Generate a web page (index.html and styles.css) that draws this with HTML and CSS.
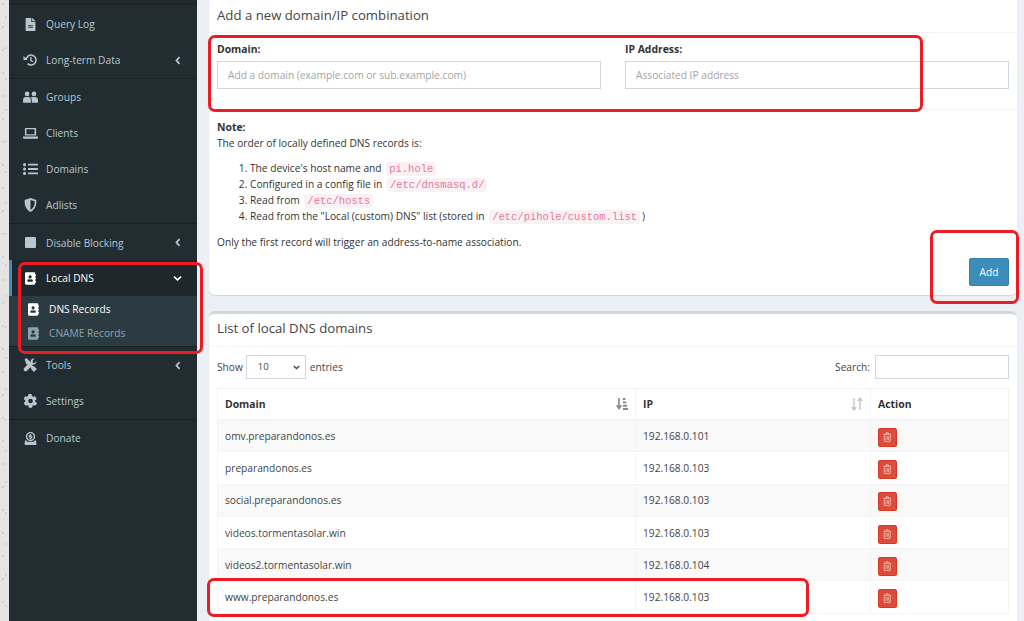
FILE: index.html
```html
<!DOCTYPE html>
<html lang="en">
<head>
<meta charset="utf-8">
<title>Local DNS Records</title>
<link rel="stylesheet" href="styles.css">
</head>
<body>
<svg class="defs" width="0" height="0" aria-hidden="true">
  <symbol id="i-file" viewBox="0 0 384 512"><path d="M224 136V0H24C10.7 0 0 10.7 0 24v464c0 13.3 10.7 24 24 24h336c13.3 0 24-10.7 24-24V160H248c-13.2 0-24-10.8-24-24zm64 236c0 6.6-5.4 12-12 12H108c-6.6 0-12-5.4-12-12v-8c0-6.6 5.4-12 12-12h168c6.6 0 12 5.4 12 12v8zm0-64c0 6.600-5.4 12-12 12H108c-6.6 0-12-5.4-12-12v-8c0-6.6 5.4-12 12-12h168c6.6 0 12 5.4 12 12v8zm96-186.100v6.100H256V0h6.100c6.400 0 12.500 2.500 17 7l97.900 98c4.500 4.500 7 10.600 7 16.900z"/></symbol>
  <symbol id="i-history" viewBox="0 0 24 24"><path d="M4.500 12a8.500 8.500 0 1 1 2.700 6.200" fill="none" stroke="currentColor" stroke-width="2.600"/><path d="M0 5l7 7H0z"/><path d="M12.500 7v5.500l3.500 2.500" fill="none" stroke="currentColor" stroke-width="2.400"/></symbol>
  <symbol id="i-users" viewBox="0 0 24 18"><circle cx="6.500" cy="4" r="3.700"/><circle cx="17.500" cy="4" r="3.700"/><path d="M0 17v-3c0-3 2-5 4-5h5c2 0 3.500 2 3.500 5v3a1 1 0 0 1-1 1H1a1 1 0 0 1-1-1z"/><path d="M14 18v-4c0-2-.500-3.500-1.500-5h6.500c3 0 5 2 5 5v3a1 1 0 0 1-1 1z"/></symbol>
  <symbol id="i-laptop" viewBox="0 0 24 18"><path d="M4 1h16a1 1 0 0 1 1 1v11H3V2a1 1 0 0 1 1-1zm1.500 2v8h13V3z" fill-rule="evenodd"/><path d="M0 14.500h24V16a2 2 0 0 1-2 2H2a2 2 0 0 1-2-2z"/></symbol>
  <symbol id="i-list" viewBox="0 0 24 20"><circle cx="2.500" cy="3" r="2.500"/><circle cx="2.500" cy="10" r="2.500"/><circle cx="2.500" cy="17" r="2.500"/><rect x="8" y="1.500" width="16" height="3" rx=".8"/><rect x="8" y="8.500" width="16" height="3" rx=".8"/><rect x="8" y="15.500" width="16" height="3" rx=".8"/></symbol>
  <symbol id="i-shield" viewBox="0 0 22 24"><path d="M11 0l10 3.500c.500 9-2 16.500-10 20.500C3 20 .500 12.500 1 3.500zm0 3.300v17.200c5.500-3.200 7.300-8.800 7.200-15z" fill-rule="evenodd"/></symbol>
  <symbol id="i-stop" viewBox="0 0 20 20"><rect width="20" height="20" rx="2"/></symbol>
  <symbol id="i-book" viewBox="0 0 448 512"><path d="M436 160c6.600 0 12-5.400 12-12v-40c0-6.600-5.400-12-12-12h-20V48c0-26.500-21.500-48-48-48H48C21.500 0 0 21.500 0 48v416c0 26.500 21.500 48 48 48h320c26.500 0 48-21.500 48-48v-48h20c6.600 0 12-5.400 12-12v-40c0-6.600-5.400-12-12-12h-20v-64h20c6.600 0 12-5.400 12-12v-40c0-6.600-5.400-12-12-12h-20v-64h20zm-228-32c35.300 0 64 28.700 64 64s-28.700 64-64 64-64-28.700-64-64 28.700-64 64-64zm112 236.800c0 10.600-10 19.200-22.400 19.200H118.400C106 384 96 375.400 96 364.800v-19.200c0-31.800 30.100-57.600 67.200-57.600h5c12.300 5.100 25.700 8 39.800 8s27.600-2.900 39.800-8h5c37.100 0 67.200 25.800 67.200 57.600v19.200z"/></symbol>
  <symbol id="i-tools" viewBox="0 0 24 24"><path d="M2 2l3-2 6 6v3l5 5 2 0 5 5-5 5-5-5v-2L8 11H5z" /><path d="M22.500 5l-3.500 3.500-3-.500-.500-3L19 1c-3-1.200-7 .800-6.800 5l-11 11c-1.500 1.500-1.300 3.500 0 4.800s3.300 1.400 4.800 0l11-11c4 .200 6-3.300 4.500-5.800z"/></symbol>
  <symbol id="i-cog" viewBox="0 0 24 24"><path d="M22 14.500l-2-1.100c.100-1 .100-1.900 0-2.900l2-1.100c.300-.200.400-.500.300-.800-.600-1.700-1.500-3.300-2.700-4.600-.200-.200-.600-.300-.800-.200l-2 1.200c-.800-.600-1.700-1.200-2.600-1.500V1.200c0-.300-.200-.600-.500-.700-1.800-.400-3.600-.400-5.300 0-.300.100-.500.300-.500.700v2.300c-.900.300-1.800.900-2.600 1.500l-2-1.200c-.300-.100-.600-.100-.800.200C2.200 5.300 1.300 6.900.700 8.600c-.100.300 0 .600.300.800l2 1.100c-.100 1-.100 1.900 0 2.900l-2 1.100c-.300.200-.400.500-.300.800.600 1.700 1.500 3.300 2.700 4.600.200.200.600.300.800.200l2-1.200c.800.600 1.700 1.200 2.600 1.500v2.300c0 .300.200.600.500.700 1.800.400 3.600.400 5.300 0 .300-.100.500-.300.500-.700v-2.300c.900-.300 1.800-.900 2.600-1.500l2 1.200c.300.100.600.100.800-.200 1.200-1.300 2.100-2.900 2.700-4.600.100-.300 0-.600-.300-.800zM12 16a4 4 0 1 1 0-8 4 4 0 0 1 0 8z"/></symbol>
  <symbol id="i-donate" viewBox="0 0 24 24"><path d="M12 1.500a8 8 0 1 1 0 16 8 8 0 0 1 0-16zm0 2.500a5.500 5.500 0 1 0 0 11 5.500 5.500 0 0 0 0-11z" fill-rule="evenodd"/><path d="M11 5.500h2v1.200h2v1.600h-3.500v.7H15V13h-2v1.200h-2V13H9v-1.600h3.500v-.7H9V6.700h2z"/><path d="M3 16h2l1 2.500h12l1-2.500h2l1 4v3a1 1 0 0 1-1 1H3a1 1 0 0 1-1-1v-3z"/></symbol>
  <symbol id="i-trash" viewBox="0 0 20 24"><path d="M1 5h18M7 4.500l1-3h4l1 3" fill="none" stroke="currentColor" stroke-width="2"/><path d="M3 5.500V21a1.500 1.500 0 0 0 1.500 1.500h11A1.500 1.500 0 0 0 17 21V5.500" fill="none" stroke="currentColor" stroke-width="2"/><path d="M7 9v10M10 9v10M13 9v10" fill="none" stroke="currentColor" stroke-width="1.500"/></symbol>
  <symbol id="i-left" viewBox="0 0 10 14"><path d="M7.500 1.500L2.500 7l5 5.500" fill="none" stroke="currentColor" stroke-width="3"/></symbol>
  <symbol id="i-down" viewBox="0 0 14 10"><path d="M1.500 2l5.500 5 5.500-5" fill="none" stroke="currentColor" stroke-width="2.600"/></symbol>
  <symbol id="i-sort-active" viewBox="0 0 14 14"><path d="M3.500 0v11M0.800 8.500l2.700 3.800 2.700-3.800" fill="none" stroke="currentColor" stroke-width="1.900"/><path d="M8 0h3v2.200H8zM8 4h4v2.200H8zM8 8h5v2.200H8zM8 11.800h6V14H8z"/></symbol>
  <symbol id="i-sort" viewBox="0 0 12 14"><path d="M3 1v12M.8 10l2.200 3 2.200-3M9 13V1M6.800 4L9 1l2.200 3" fill="none" stroke="currentColor" stroke-width="1.500"/></symbol>
</svg>

<div class="desk"></div>

<nav class="sidebar">
  <div class="side-top"></div>
  <ul class="side-group">
    <li class="side-item"><svg class="ico ico-file"><use href="#i-file"/></svg><span>Query Log</span></li>
    <li class="side-item"><svg class="ico"><use href="#i-history"/></svg><span>Long-term Data</span><svg class="caret"><use href="#i-left"/></svg></li>
  </ul>
  <ul class="side-group">
    <li class="side-item"><svg class="ico"><use href="#i-users"/></svg><span>Groups</span></li>
    <li class="side-item"><svg class="ico"><use href="#i-laptop"/></svg><span>Clients</span></li>
    <li class="side-item"><svg class="ico"><use href="#i-list"/></svg><span>Domains</span></li>
    <li class="side-item"><svg class="ico"><use href="#i-shield"/></svg><span>Adlists</span></li>
  </ul>
  <ul class="side-group">
    <li class="side-item side-short"><svg class="ico ico-stop"><use href="#i-stop"/></svg><span>Disable Blocking</span><svg class="caret"><use href="#i-left"/></svg></li>
    <li class="side-item side-active"><svg class="ico ico-file"><use href="#i-book"/></svg><span>Local DNS</span><svg class="caret caret-down"><use href="#i-down"/></svg></li>
    <li class="side-sub">
      <div class="sub-item sub-active"><svg class="ico ico-sub"><use href="#i-book"/></svg><span>DNS Records</span></div>
      <div class="sub-item"><svg class="ico ico-sub"><use href="#i-book"/></svg><span>CNAME Records</span></div>
    </li>
  </ul>
  <ul class="side-group">
    <li class="side-item"><svg class="ico"><use href="#i-tools"/></svg><span>Tools</span><svg class="caret"><use href="#i-left"/></svg></li>
    <li class="side-item"><svg class="ico"><use href="#i-cog"/></svg><span>Settings</span></li>
  </ul>
  <ul class="side-group">
    <li class="side-item"><svg class="ico"><use href="#i-donate"/></svg><span>Donate</span></li>
  </ul>
</nav>

<main class="content">
  <section class="card card-add">
    <h3 class="card-title">Add a new domain/IP combination</h3>
    <div class="form-row">
      <label class="field"><b>Domain:</b><input class="input" placeholder="Add a domain (example.com or sub.example.com)"></label>
      <label class="field"><b>IP Address:</b><input class="input" placeholder="Associated IP address"></label>
    </div>
    <div class="note">
      <p class="note-head"><b>Note:</b><br>The order of locally defined DNS records is:</p>
      <ol class="note-list">
        <li>The device's host name and <code>pi.hole</code></li>
        <li>Configured in a config file in <code>/etc/dnsmasq.d/</code></li>
        <li>Read from <code>/etc/hosts</code></li>
        <li>Read from the "Local (custom) DNS" list (stored in <code>/etc/pihole/custom.list</code>)</li>
      </ol>
      <p class="note-foot">Only the first record will trigger an address-to-name association.</p>
    </div>
    <div class="actions"><button class="btn-add">Add</button></div>
  </section>

  <section class="card card-list">
    <h3 class="card-title">List of local DNS domains</h3>
    <div class="list-body">
      <div class="tools">
        <div class="tools-left">Show <span class="select">10<svg class="select-arrow"><use href="#i-down"/></svg></span> entries</div>
        <div class="tools-right">Search: <span class="search"></span></div>
      </div>
      <table class="table">
        <colgroup><col class="col-domain"><col class="col-ip"><col></colgroup>
        <thead>
          <tr><th><div class="th-in">Domain<svg class="sort sort-on"><use href="#i-sort-active"/></svg></div></th><th><div class="th-in">IP<svg class="sort"><use href="#i-sort"/></svg></div></th><th>Action</th></tr>
        </thead>
        <tbody>
          <tr><td>omv.preparandonos.es</td><td>192.168.0.101</td><td><span class="btn-del"><svg class="trash"><use href="#i-trash"/></svg></span></td></tr>
          <tr><td>preparandonos.es</td><td>192.168.0.103</td><td><span class="btn-del"><svg class="trash"><use href="#i-trash"/></svg></span></td></tr>
          <tr><td>social.preparandonos.es</td><td>192.168.0.103</td><td><span class="btn-del"><svg class="trash"><use href="#i-trash"/></svg></span></td></tr>
          <tr><td>videos.tormentasolar.win</td><td>192.168.0.103</td><td><span class="btn-del"><svg class="trash"><use href="#i-trash"/></svg></span></td></tr>
          <tr><td>videos2.tormentasolar.win</td><td>192.168.0.104</td><td><span class="btn-del"><svg class="trash"><use href="#i-trash"/></svg></span></td></tr>
          <tr><td>www.preparandonos.es</td><td>192.168.0.103</td><td><span class="btn-del"><svg class="trash"><use href="#i-trash"/></svg></span></td></tr>
        </tbody>
      </table>
    </div>
  </section>
</main>

<div class="mark mark-form"></div>
<div class="mark mark-add"></div>
<div class="mark mark-side"></div>
<div class="mark mark-row"></div>
</body>
</html>
```

FILE: styles.css
```css
* { box-sizing: border-box; }
html, body { height: 100%; }
body {
  margin: 0;
  display: flex;
  height: 621px;
  overflow: hidden;
  position: relative;
  background: #ecf0f5;
  color: #333;
  font: 10.2px/16px "Open Sans", "Noto Sans", sans-serif;
}
.defs { position: absolute; }
ul, ol { margin: 0; padding: 0; list-style: none; }
svg { fill: currentColor; }
b { font-size: 10.4px; }

.desk {
  width: 9px;
  flex: none;
  background-color: #e4e4e4;
  background-image:
    radial-gradient(circle at 3px 4px, #cfcfcf 0, #cfcfcf .7px, transparent 1px),
    radial-gradient(circle at 6px 17px, #d2d2d2 0, #d2d2d2 .7px, transparent 1px);
  background-size: 9px 23px, 9px 31px;
}

.sidebar { width: 188px; flex: none; background: #222d32; color: #b8c7ce; }
.side-top { height: 5px; border-bottom: 1px solid #1a2226; background: #1f292e; }
.side-group { border-bottom: 1px solid #1a2226; }
.side-group:last-child { border-bottom: 0; }
.side-item {
  height: 36px;
  display: flex;
  align-items: center;
  padding: 0 15px 0 11px;
  border-left: 3px solid transparent;
}
.side-item span { margin-left: 8px; flex: 1; }
.side-group:nth-of-type(1) { height: 74px; padding-top: 1px; }
.side-group:nth-of-type(2) { height: 145px; }
.side-group:nth-of-type(3) { height: 123px; padding-top: 1px; }
.side-group:nth-of-type(4) { height: 73px; }
.side-short { height: 35px; }
.side-active { background: #1e282c; border-left-color: #3c8dbc; color: #fff; }
.ico { width: 15px; height: 14px; flex: none; }
.ico-file { width: 11px; height: 13px; margin: 0 2px; }
.ico-stop { width: 11px; height: 11px; margin: 0 2px; }
.ico-sub { width: 11px; height: 13px; }
.caret { width: 6px; height: 9px; flex: none; margin-right: 1px; }
.caret-down { width: 9px; height: 7px; margin-right: 0; }
.side-sub { background: #2c3b41; height: 50px; padding-top: 1px; }
.sub-item { height: 24px; display: flex; align-items: center; padding-left: 19px; color: #8aa4af; }
.sub-item span { margin-left: 10px; }
.sub-active { color: #fff; }

.content { flex: 1; padding: 0 7px 0 12px; min-width: 0; }
.card {
  background: #fff;
  border-radius: 6px;
  box-shadow: 0 1px 1px rgba(0, 0, 0, .1);
}
.card-title {
  margin: 0;
  font-weight: 400;
  font-size: 13.200px;
  line-height: 20px;
  color: #444;
  padding: 5px 8px 7px;
  border-bottom: 1px solid #f4f4f4;
}
.card-add { height: 295px; border-radius: 0 0 6px 6px; }
.form-row {
  display: flex;
  gap: 24px;
  height: 77px;
  padding: 9px 8px 0;
  border-bottom: 1px solid #f4f4f4;
}
.field { flex: 1; display: flex; flex-direction: column; gap: 4px; color: #333; }
.field b { line-height: 15px; }
.input {
  height: 28px;
  padding: 0 10px;
  border: 1px solid #d2d6de;
  background: #fff;
  font: inherit;
  outline: 0;
}
.input::placeholder { color: #a3a3a3; opacity: 1; }
.note { padding: 9px 8px 0; }
.note p { margin: 0; }
.note-list { margin: 8.500px 0 0; padding-left: 33px; list-style: decimal; }
.note-list li { line-height: 16.300px; }
.note .note-foot { margin-top: 9px; }
code {
  font: 10.500px "Liberation Mono", monospace;
  color: #e8769b;
  background: #f9f2f4;
  border-radius: 3px;
  padding: 1px 3px;
  margin: 0 2px;
}
.actions { display: flex; justify-content: flex-end; padding: 0 8px; margin-top: 8px; }
.btn-add {
  width: 40px;
  height: 28px;
  border: 1px solid #367fa9;
  border-radius: 2px;
  background: #3c8dbc;
  color: #fff;
  font: inherit;
}

.card-list {
  margin-top: 16px;
  border-top: 3px solid #d2d6de;
  height: 320px;
}
.card-list .card-title { padding: 4px 8px 8px; }
.list-body { padding: 8px 8px 0; }
.tools { display: flex; justify-content: space-between; align-items: center; height: 24px; color: #444; }
.tools-left { display: flex; align-items: center; gap: 3px; }
.tools-right { display: flex; align-items: center; gap: 5px; }
.select {
  width: 60px;
  height: 24px;
  margin-right: 1px;
  border: 1px solid #d2d6de;
  display: flex;
  align-items: center;
  justify-content: space-between;
  padding: 0 5px 0 11px;
  font-size: 9.500px;
}
.select-arrow { width: 7px; height: 5px; }
.search { width: 134px; height: 24px; border: 1px solid #d2d6de; display: block; }
.table {
  margin-top: 9px;
  width: 100%;
  table-layout: fixed;
  border-collapse: collapse;
  border: 1px solid #f4f4f4;
}
.col-domain { width: 418px; }
.col-ip { width: 235px; }
.table th, .table td { border: 1px solid #f4f4f4; padding: 0 7px; text-align: left; }
.table th { height: 31px; border-bottom: 2px solid #f4f4f4; color: #333; font-size: 10.400px; }
.table td { height: 32.300px; color: #444; }
.table tbody tr:nth-child(odd) { background: #f9f9f9; }
.th-in { display: flex; justify-content: space-between; align-items: center; }
.sort { width: 12px; height: 14px; color: #c8c8c8; }
.sort-on { color: #8a8a8a; }
.btn-del {
  display: flex;
  align-items: center;
  justify-content: center;
  width: 19px;
  height: 19px;
  margin-top: 3px;
  background: #dd4b39;
  border: 1px solid #d73925;
  border-radius: 2px;
  color: #f6c9c3;
}
.trash { width: 8.500px; height: 10.500px; }

.mark {
  position: absolute;
  border: 3.500px solid #ed1c24;
  border-radius: 7px;
  pointer-events: none;
}
.mark-form { left: 208px; top: 35px; width: 715px; height: 77px; }
.mark-add { left: 930px; top: 230px; width: 89px; height: 74px; }
.mark-side { left: 18px; top: 262px; width: 185px; height: 92px; }
.mark-row { left: 207px; top: 578px; width: 602px; height: 39px; }
```
